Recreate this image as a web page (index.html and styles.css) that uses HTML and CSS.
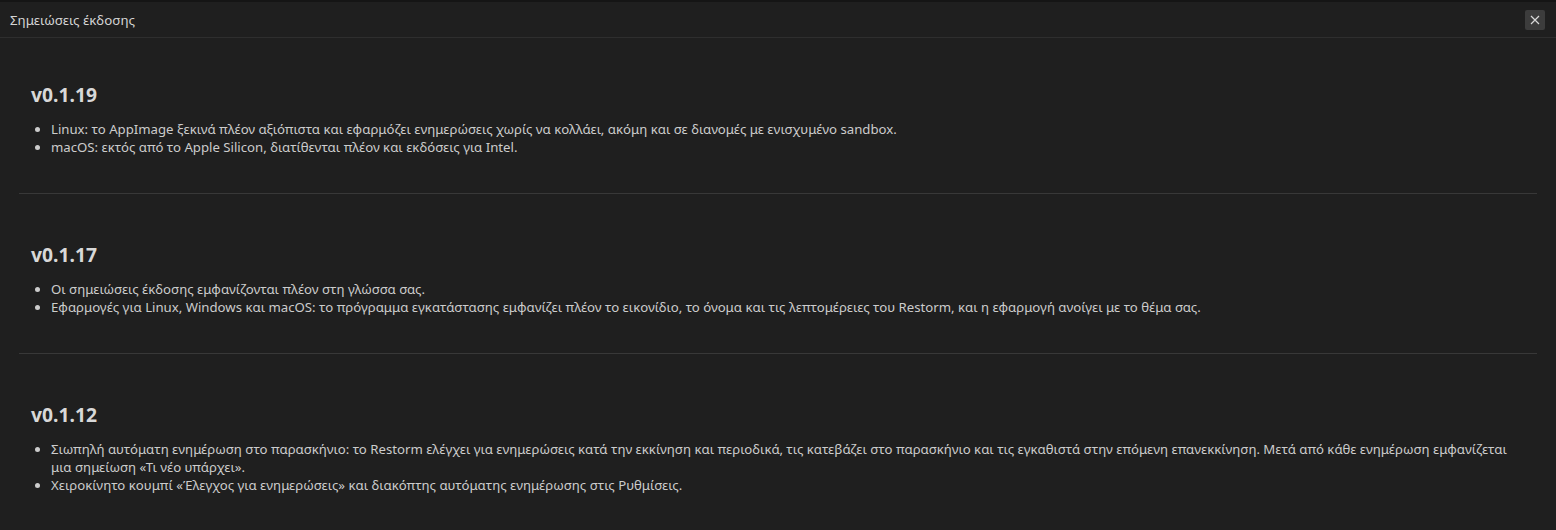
FILE: index.html
```html
<!DOCTYPE html>
<html lang="el">
<head>
    <meta charset="UTF-8">
    <meta name="viewport" content="width=device-width, initial-scale=1.0">
    <title>Σημειώσεις έκδοσης</title>
    <link rel="stylesheet" href="styles.css">
</head>
<body>
    <div class="window">
        <div class="titlebar">
            <span class="title">Σημειώσεις έκδοσης</span>
            <button class="close-btn" title="Κλείσιμο">
                <svg width="10" height="10" viewBox="0 0 10 10"><path d="M1 1L9 9M9 1L1 9" stroke="#d8d8d8" stroke-width="1.2" fill="none"/></svg>
            </button>
        </div>

        <div class="notes">
            <div class="release">
                <h2>v0.1.19</h2>
                <ul>
                    <li>Linux: το AppImage ξεκινά πλέον αξιόπιστα και εφαρμόζει ενημερώσεις χωρίς να κολλάει, ακόμη και σε διανομές με ενισχυμένο sandbox.</li>
                    <li>macOS: εκτός από το Apple Silicon, διατίθενται πλέον και εκδόσεις για Intel.</li>
                </ul>
            </div>
            <div class="release">
                <h2>v0.1.17</h2>
                <ul>
                    <li>Οι σημειώσεις έκδοσης εμφανίζονται πλέον στη γλώσσα σας.</li>
                    <li>Εφαρμογές για Linux, Windows και macOS: το πρόγραμμα εγκατάστασης εμφανίζει πλέον το εικονίδιο, το όνομα και τις λεπτομέρειες του Restorm, και η εφαρμογή ανοίγει με το θέμα σας.</li>
                </ul>
            </div>
            <div class="release">
                <h2>v0.1.12</h2>
                <ul>
                    <li>Σιωπηλή αυτόματη ενημέρωση στο παρασκήνιο: το Restorm ελέγχει για ενημερώσεις κατά την εκκίνηση και περιοδικά, τις κατεβάζει στο παρασκήνιο και τις εγκαθιστά στην επόμενη επανεκκίνηση. Μετά από κάθε ενημέρωση εμφανίζεται μια σημείωση «Τι νέο υπάρχει».</li>
                    <li>Χειροκίνητο κουμπί «Έλεγχος για ενημερώσεις» και διακόπτης αυτόματης ενημέρωσης στις Ρυθμίσεις.</li>
                </ul>
            </div>
        </div>
    </div>
</body>
</html>
```

FILE: styles.css
```css
html, body {
    margin: 0;
    height: 100%;
}
body {
    font-family: "Noto Sans", "Open Sans", sans-serif;
    background-color: #151515;
    color: #cccccc;
    overflow: hidden;
}
.window {
    margin-top: 2px;
    height: calc(100% - 2px);
    background-color: #1f1f1f;
    display: flex;
    flex-direction: column;
}
.titlebar {
    height: 35px;
    display: flex;
    align-items: center;
    justify-content: space-between;
    padding: 0 11px 0 10px;
    border-bottom: 1px solid #2e2e2e;
    flex-shrink: 0;
}
.title {
    font-size: 13.3px;
    color: #d4d4d4;
}
.close-btn {
    width: 20px;
    height: 20px;
    padding: 0;
    border: none;
    border-radius: 2px;
    background-color: #3c3c3c;
    display: flex;
    align-items: center;
    justify-content: center;
    cursor: pointer;
}
.notes {
    padding: 0 19px;
}
.release {
    padding: 48px 12px 37px;
    border-bottom: 1px solid #383838;
}
.release:first-child {
    padding-top: 44px;
}
.release:last-child {
    border-bottom: none;
}
.release h2 {
    margin: 0 0 12px 0;
    font-size: 19.3px;
    font-weight: 700;
    color: #d8d8d8;
    line-height: 26px;
}
.release ul {
    margin: 0;
    padding-left: 20px;
}
.release li {
    font-size: 13.2px;
    line-height: 18px;
}
```
